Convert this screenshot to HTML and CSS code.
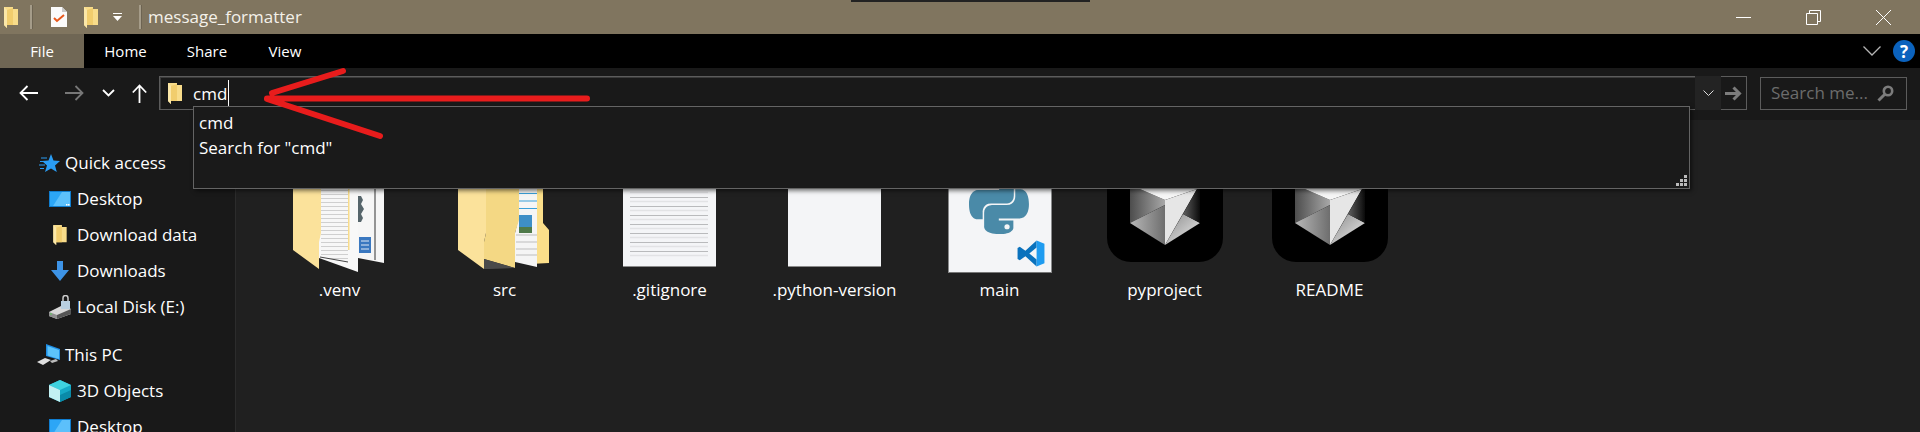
FILE: index.html
```html
<!DOCTYPE html>
<html lang="en">
<head>
<meta charset="utf-8">
<title>message_formatter</title>
<link rel="stylesheet" href="styles.css">
</head>
<body>
<svg class="defs" aria-hidden="true">
  <defs>
    <pattern id="lines" width="4" height="4" patternUnits="userSpaceOnUse"><rect width="4" height="4" fill="#f7f7f7"/><rect y="2" width="4" height="1" fill="#cfcfcf"/></pattern>
    <linearGradient id="fA" x1="0" y1="0" x2="1" y2="0"><stop offset="0" stop-color="#4d4d4d"/><stop offset="1" stop-color="#a8a8a8"/></linearGradient>
    <linearGradient id="fB" x1="0" y1="0" x2="1" y2="0"><stop offset="0" stop-color="#b8b8b8"/><stop offset="1" stop-color="#6e6e6e"/></linearGradient>
    <linearGradient id="fC" x1="0" y1="0" x2="1" y2="1"><stop offset="0" stop-color="#8a8a8a"/><stop offset="1" stop-color="#f0f0f0"/></linearGradient>
    <linearGradient id="fD" x1="0" y1="0" x2="1" y2="0"><stop offset="0" stop-color="#606060"/><stop offset="1" stop-color="#0a0a0a"/></linearGradient>
    <symbol id="gem" viewBox="0 0 116 73">
      <rect x="0" y="-30" width="116" height="103" rx="24" fill="#000"/>
      <polygon points="23,0 33,0 58,11 58,16 23,34" fill="url(#fA)"/>
      <polygon points="23,34 58,16 58,56" fill="url(#fB)"/>
      <polygon points="33,0 90,0 58,11" fill="#f6f6f6"/>
      <polygon points="58,11 90,0 58,56" fill="#e6e6e6"/>
      <polygon points="76,25 93,34 58,56" fill="url(#fC)"/>
      <polygon points="90,0 93,0 93,34 76,25" fill="url(#fD)"/>
    </symbol>
    <symbol id="folder-s" viewBox="0 0 14 21">
      <polygon points="0,0 9,0 9,2 14,2 14,18 3,18 3,21 0,18" fill="#f8dc8a"/>
      <polygon points="3,3 9,1 9,18 3,18" fill="#f1cd6d"/>
      <polygon points="0,0 3,3 3,21 0,18" fill="#fbe7a8"/>
    </symbol>
    <symbol id="desk" viewBox="0 0 22 16">
      <rect width="22" height="16" fill="#0f7dd0"/>
      <rect x="1" y="1" width="20" height="14" fill="#2ca6f6"/>
      <polygon points="13,1 21,1 21,15 4,15" fill="#5cc0fb"/>
      <rect x="17" y="13" width="1.5" height="1.5" fill="#fff"/><rect x="19" y="13" width="1.5" height="1.5" fill="#fff"/>
    </symbol>
  </defs>
</svg>

<header class="titlebar">
  <svg class="ico-folder-t"><use href="#folder-s"/></svg>
  <span class="qsep first"></span>
  <svg class="ico-note" viewBox="0 0 16 20"><polygon points="0,0 11,0 16,5 16,20 0,20" fill="#fbfbfb"/><polygon points="11,0 16,5 11,5" fill="#c9c9c9"/><path d="M3 11l3 3 7-6" fill="none" stroke="#e8581c" stroke-width="2"/></svg>
  <svg class="ico-folder-q"><use href="#folder-s"/></svg>
  <svg class="ico-qdrop" viewBox="0 0 9 8"><rect width="9" height="1" fill="#fff"/><polygon points="0,3 9,3 4.5,8" fill="#fff"/></svg>
  <span class="qsep second"></span>
  <span class="win-title">message_formatter</span>
  <div class="win-ctrls">
    <svg viewBox="0 0 15 15"><path d="M0 7.5h15" stroke="#fff"/></svg>
    <svg viewBox="0 0 15 15"><path d="M.5 3.5h11v11H.5zM3.5 3.5v-3h11v11h-3" fill="none" stroke="#fff"/></svg>
    <svg viewBox="0 0 15 15"><path d="M0 0l15 15M15 0L0 15" stroke="#fff"/></svg>
  </div>
</header>

<nav class="ribbon">
  <span class="tab file-tab">File</span>
  <span class="tab home-tab">Home</span>
  <span class="tab share-tab">Share</span>
  <span class="tab view-tab">View</span>
  <div class="ribbon-end">
    <svg class="ico-collapse" viewBox="0 0 18 10"><path d="M.5.5L9 9 17.500.5" fill="none" stroke="#b5b5b5" stroke-width="1.300"/></svg>
    <span class="help">?</span>
  </div>
</nav>

<div class="navbar">
  <svg class="nav-back" viewBox="0 0 19 16"><path d="M19 8H1.500M8.500 1L1.500 8l7 7" fill="none" stroke="#fff" stroke-width="1.800"/></svg>
  <svg class="nav-fwd" viewBox="0 0 19 16"><path d="M0 8h17.500M10.500 1l7 7-7 7" fill="none" stroke="#777" stroke-width="1.800"/></svg>
  <svg class="nav-hist" viewBox="0 0 13 8"><path d="M1 1l5.500 5.500L12 1" fill="none" stroke="#fff" stroke-width="1.800"/></svg>
  <svg class="nav-up" viewBox="0 0 15 19"><path d="M7.500 19V1.500M.8 8.500l6.700-7 6.700 7" fill="none" stroke="#fff" stroke-width="1.800"/></svg>
  <div class="address">
    <svg class="addr-folder"><use href="#folder-s"/></svg>
    <span class="addr-text">cmd</span>
  </div>
  <div class="addr-drop"><svg viewBox="0 0 11 6"><path d="M.5.5l5 5 5-5" fill="none" stroke="#ddd"/></svg></div>
  <div class="addr-go"><svg viewBox="0 0 17 15"><path d="M0 7.500h14M8.500 1.500l6 6-6 6" fill="none" stroke="#7c7c7c" stroke-width="3"/></svg></div>
  <div class="search">
    <span class="search-text">Search me...</span>
    <svg viewBox="0 0 17 17"><circle cx="11" cy="6" r="4.200" fill="none" stroke="#7c7c7c" stroke-width="2.600"/><path d="M7.800 9.200L1.500 15.500" stroke="#7c7c7c" stroke-width="3"/></svg>
  </div>
</div>

<main class="body">
  <aside class="sidebar">
    <div class="row section">
      <svg class="ico" viewBox="0 0 24 24"><polygon points="14,3 16.500,9.500 23,10 18,14.500 19.800,21 14,17.500 8,21 10,14.500 5,10 11.500,9.500" fill="#2a9df4"/><path d="M4 7h6M3 10.500h4M2 14h6M3 17.500h4" stroke="#2a9df4" stroke-width="1"/></svg>
      <span>Quick access</span>
    </div>
    <div class="row item"><svg class="ico" viewBox="0 0 24 24"><use href="#desk" x="1" y="4" width="22" height="16"/></svg><span>Desktop</span></div>
    <div class="row item"><svg class="ico" viewBox="0 0 24 24"><use href="#folder-s" x="5" y="2" width="14" height="20"/></svg><span>Download data</span></div>
    <div class="row item"><svg class="ico" viewBox="0 0 24 24"><path d="M9 2h6v9h6l-9 11-9-11h6z" fill="#3d93e6"/></svg><span>Downloads</span></div>
    <div class="row item"><svg class="ico" viewBox="0 0 24 24"><polygon points="1,17 15,10 23,14 23,19 9,24 1,21" fill="#d8d8d8"/><polygon points="1,17 9,20 9,24 1,21" fill="#8f8f8f"/><polygon points="9,20 23,14 23,19 9,24" fill="#555"/><rect x="13" y="6" width="9" height="8" fill="#b9cfe0"/><path d="M15 6V3a2.500 2.500 0 0 1 5 0v3" fill="none" stroke="#ccc" stroke-width="1.500"/><rect x="2" y="18.500" width="2" height="1" fill="#5fd35f"/></svg><span>Local Disk (E:)</span></div>
    <div class="row section second-group">
      <svg class="ico" viewBox="0 0 24 24"><polygon points="9,1 23,6 23,17 9,13" fill="#1f8fe6"/><polygon points="10.500,3 22,7 22,16 10.500,12.500" fill="#5cc3fb"/><polygon points="0,19 8,15 14,17 6,22" fill="#dfdfdf"/><polygon points="13,18 19,16 21,18 15,20" fill="#bdbdbd"/></svg>
      <span>This PC</span>
    </div>
    <div class="row item"><svg class="ico" viewBox="0 0 24 24"><polygon points="12,1 23,6 23,18 12,23 1,18 1,6" fill="#16a9c6"/><polygon points="12,1 23,6 12,11 1,6" fill="#3fd2df"/><polygon points="1,6 12,11 12,23 1,18" fill="#c2f1f3"/><polygon points="12,16 23,11 23,18 12,23" fill="#0a8aa8"/></svg><span>3D Objects</span></div>
    <div class="row item"><svg class="ico" viewBox="0 0 24 24"><use href="#desk" x="1" y="4" width="22" height="16"/></svg><span>Desktop</span></div>
  </aside>

  <section class="files">
    <figure class="file">
      <svg viewBox="257 148 165 132">
        <polygon points="358,160 384,160 384,263 358,258" fill="#f6f6f6"/>
        <path d="M358 196h3l2 4-2 4 3 5-3 5 2 4-2 4h-3z" fill="#56656b"/>
        <rect x="374.500" y="160" width="1" height="100" fill="#333"/>
        <rect x="359" y="237" width="12" height="16" fill="#3a78c0"/>
        <path d="M361 241h8M361 245h8M361 249h8" stroke="#dfe9f5" stroke-width="1"/>
        <polygon points="319,160 358,160 358,272 319,258" fill="#f8f8f8"/>
        <polygon points="321,160 348,160 348,262 321,257" fill="url(#lines)"/>
        <path d="M320 257l28 5" stroke="#444" stroke-width="1"/>
        <rect x="348" y="160" width="1.500" height="90" fill="#f8dc8a"/>
        <polygon points="293,160 321,160 321,233 319,242 319,269 293,250" fill="#fbe29b"/>
      </svg>
      <figcaption>.venv</figcaption>
    </figure>
    <figure class="file">
      <svg viewBox="422 148 165 132">
        <polygon points="530,160 543,160 543,223 549,230 549,263 530,264" fill="#fbdf8a"/>
        <polygon points="518,160 537,160 537,267 515,262 515,233 518,220" fill="#f5f5f5"/>
        <path d="M519 193.500h18M519 201h18M519 208.500h18" stroke="#3aa0d8" stroke-width="1.200"/>
        <rect x="519" y="215" width="13" height="18" fill="#3e8fc7"/>
        <rect x="519" y="227" width="13" height="6" fill="#4f7a4a"/>
        <path d="M516 235h21M516 242h21M516 249h21M516 255h21" stroke="#bdbdbd" stroke-width="1"/>
        <polygon points="486,160 519,160 519,220 515,233 515,268 484,259 484,242 486,233" fill="#f4d884"/>
        <polygon points="458,160 486,160 486,233 484,242 484,269 458,250" fill="#fbe29b"/>
        <polygon points="484,259 515,268 490,269 484,269" fill="#4a4a4a"/>
      </svg>
      <figcaption>src</figcaption>
    </figure>
    <figure class="file">
      <svg viewBox="587 148 165 132">
        <rect x="623" y="150" width="93" height="117" fill="#f4f5f7"/>
        <path d="M623 266.500h93" stroke="#8a8a8a"/>
        <path d="M630 192.500h78M630 201.500h78M630 210.500h78M630 219.500h78M630 228.500h78M630 237.500h78M630 246.500h78M630 255.500h78" stroke="#e2e3e5" stroke-width="1.500"/>
        <path d="M630 197.500h78M630 206.500h78M630 215.500h78M630 224.500h78M630 233.500h78M630 242.500h78M630 251.500h78" stroke="#b9babc"/>
      </svg>
      <figcaption>.gitignore</figcaption>
    </figure>
    <figure class="file">
      <svg viewBox="752 148 165 132">
        <rect x="788" y="150" width="93" height="117" fill="#f4f5f7"/>
        <path d="M788 266.500h93" stroke="#8a8a8a"/>
      </svg>
      <figcaption>.python-version</figcaption>
    </figure>
    <figure class="file">
      <svg viewBox="917 148 165 132">
        <rect x="948.500" y="150" width="103" height="123" fill="#f4f5f7"/>
        <path d="M948.500 272.500h103" stroke="#777"/>
        <g transform="translate(969 174) scale(.545)" fill="#4a8aa8">
          <path id="py" fill-rule="evenodd" d="M54.900.9c-28 0-26.300 12.100-26.300 12.100v12.600h26.700v3.800H18S0 27.400 0 55.800s15.700 27.300 15.700 27.300h9.400V69.900s-.5-15.700 15.500-15.700h26.600s15 .2 15-14.500V15.400S84.500.9 54.900.9zM40.200 9.400a4.800 4.800 0 1 1 0 9.600 4.800 4.800 0 0 1 0-9.600z"/>
          <use href="#py" transform="rotate(180 55 55.500)"/>
        </g>
        <g transform="translate(1017 240) scale(.28 .27)">
          <path d="M70 2L30 40 10 25 2 30v40l8 5 20-15 40 38V72L44 50l26-22z" fill="#0a72bd"/>
          <path d="M70 2l28 12v72L70 98z" fill="#1f9cf0"/>
        </g>
      </svg>
      <figcaption>main</figcaption>
    </figure>
    <figure class="file">
      <svg viewBox="1082 148 165 132"><use href="#gem" x="25" y="41" width="116" height="73" transform="translate(1082 148)"/></svg>
      <figcaption>pyproject</figcaption>
    </figure>
    <figure class="file">
      <svg viewBox="1247 148 165 132"><use href="#gem" x="25" y="41" width="116" height="73" transform="translate(1247 148)"/></svg>
      <figcaption>README</figcaption>
    </figure>
  </section>
</main>

<div class="suggest">
  <div class="suggest-row">cmd</div>
  <div class="suggest-row">Search for "cmd"</div>
  <svg class="grip" viewBox="0 0 11 11"><path d="M8 0h3v3H8zM4 4h3v3H4zM8 4h3v3H8zM0 8h3v3H0zM4 8h3v3H4zM8 8h3v3H8z" fill="#bbb"/></svg>
</div>

<svg class="annot" viewBox="0 0 1920 432" aria-hidden="true">
  <path d="M587 98.500H267M272 93l71-22M267 99l113 37" fill="none" stroke="#e81c1c" stroke-width="6" stroke-linecap="round"/>
</svg>
<div class="screen-edge"></div>
</body>
</html>
```

FILE: styles.css
```css
* { box-sizing: border-box; }
html, body { margin: 0; height: 432px; overflow: hidden; }
body {
  position: relative;
  background: #191919;
  color: #fff;
  font: 17px/20px "Open Sans", "Noto Sans", sans-serif;
}
.defs { display: block; width: 0; height: 0; }

.titlebar { height: 34px; background: #80755f; display: flex; align-items: center; padding-left: 4px; }
.titlebar svg { display: block; }
.ico-folder-t { width: 14px; height: 21px; }
.qsep { width: 2px; height: 24px; background: #a59c89; box-shadow: 1px 0 0 #6d6452; }
.qsep.first { margin-left: 12px; }
.ico-note { width: 16px; height: 20px; margin-left: 19px; }
.ico-folder-q { width: 14px; height: 21px; margin-left: 17px; }
.ico-qdrop { width: 9px; height: 8px; margin-left: 15px; }
.qsep.second { margin-left: 17px; }
.win-title { margin-left: 7px; color: #f4f1ea; }
.win-ctrls { margin-left: auto; display: flex; gap: 55px; padding-right: 29px; }
.win-ctrls svg { width: 15px; height: 15px; }

.ribbon { height: 34px; background: #000; display: flex; align-items: stretch; font-size: 15px; }
.tab { display: flex; align-items: center; justify-content: center; }
.file-tab { width: 84px; background: #6f6654; }
.home-tab { width: 83px; }
.share-tab { width: 80px; }
.view-tab { width: 76px; }
.ribbon-end { margin-left: auto; display: flex; align-items: center; gap: 12px; padding-right: 5px; }
.ico-collapse { width: 18px; height: 10px; display: block; }
.help { width: 22px; height: 22px; border-radius: 50%; background: #0b62bd; display: flex; align-items: center; justify-content: center; font: 700 17px/1 "Open Sans", sans-serif; }

.navbar { height: 52px; display: flex; align-items: center; padding: 0 13px 2px 19px; background: #191919; }
.navbar svg { display: block; }
.nav-back, .nav-fwd { width: 19px; height: 16px; }
.nav-fwd { margin-left: 27px; }
.nav-hist { width: 13px; height: 8px; margin-left: 18px; }
.nav-up { width: 15px; height: 19px; margin-left: 17px; }
.address {
  flex: 1; height: 34px; margin-left: 12px; padding-left: 8px;
  display: flex; align-items: center; gap: 11px;
  border: 1px solid #5c5c5c; border-right: 0;
  box-shadow: inset 1px 1px 0 #3a3a3a;
}
.addr-folder { width: 14px; height: 21px; }
.addr-text { line-height: 27px; height: 27px; padding-right: 1px; border-right: 1px solid #fff; }
.addr-drop { width: 26px; height: 34px; background: #232323; display: flex; align-items: center; justify-content: center; }
.addr-drop svg { width: 11px; height: 6px; }
.addr-go { width: 26px; height: 34px; border: 1px solid #5c5c5c; border-left: 0; display: flex; align-items: center; justify-content: center; }
.addr-go svg { width: 17px; height: 15px; }
.search { width: 147px; height: 33px; margin-left: 13px; padding: 0 12px 0 10px; border: 1px solid #5c5c5c; display: flex; align-items: center; justify-content: space-between; color: #6c6c6c; white-space: nowrap; }
.search svg { width: 17px; height: 17px; flex: none; }

.body { height: 312px; display: flex; background: #202020; overflow: hidden; }
.sidebar { width: 236px; flex: none; padding-top: 25px; background: #191919; border-right: 1px solid #2c2c2c; }
.row { height: 36px; display: flex; align-items: center; }
.row.section { padding-left: 37px; gap: 4px; }
.row.item { padding-left: 48px; gap: 5px; }
.second-group { margin-top: 12px; }
.ico { width: 24px; height: 24px; flex: none; }

.files { display: flex; padding: 28px 0 0 21px; align-items: flex-start; }
.file { width: 165px; margin: 0; flex: none; }
.file svg { display: block; width: 165px; height: 132px; }
.file figcaption { text-align: center; line-height: 20px; }

.suggest {
  position: absolute; left: 193px; top: 106px; width: 1497px; height: 83px;
  padding: 3px 0 0 5px;
  background: #1a1a1a; border: 1px solid #646464;
  box-shadow: 2px 2px 4px rgba(0, 0, 0, .5);
}
.suggest-row { height: 25px; line-height: 25px; }
.grip { position: absolute; right: 2px; bottom: 2px; width: 11px; height: 11px; }
.annot { position: absolute; left: 0; top: 0; width: 1920px; height: 432px; pointer-events: none; }
.screen-edge { position: absolute; left: 851px; top: 0; width: 239px; height: 2px; background: #222; }
```
